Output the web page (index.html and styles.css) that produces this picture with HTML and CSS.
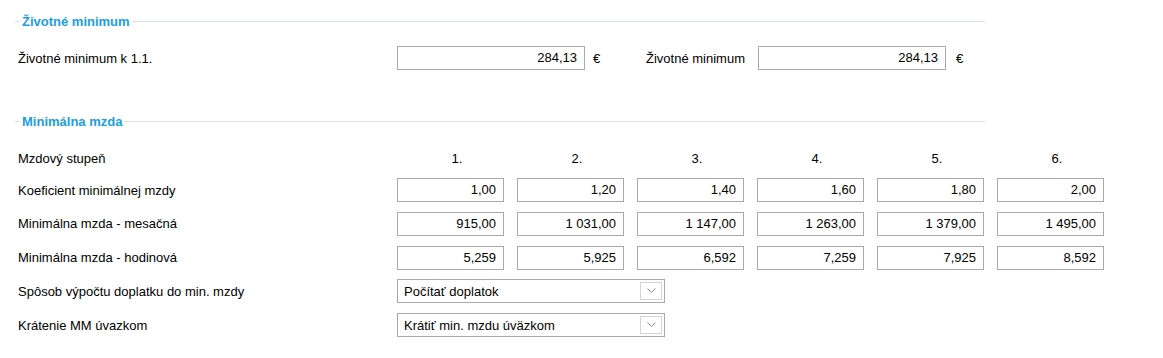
FILE: index.html
```html
<!DOCTYPE html>
<html lang="sk">
<head>
    <meta charset="UTF-8">
    <title>Životné minimum a minimálna mzda</title>
    <link rel="stylesheet" href="styles.css">
</head>
<body>
    <div class="page">
        <!-- Životné minimum -->
        <div class="group">
            <div class="group-title"><span class="line-start"></span><span class="title">Životné minimum</span><span class="line"></span></div>
            <div class="row first">
                <span class="label">Životné minimum k 1.1.</span>
                <div class="box wide">284,13</div>
                <span class="unit">€</span>
                <span class="label-inline">Životné minimum</span>
                <div class="box wide">284,13</div>
                <span class="unit second">€</span>
            </div>
        </div>

        <!-- Minimálna mzda -->
        <div class="group mzda">
            <div class="group-title"><span class="line-start"></span><span class="title">Minimálna mzda</span><span class="line"></span></div>
            <div class="row head">
                <span class="label">Mzdový stupeň</span>
                <span class="col">1.</span>
                <span class="col">2.</span>
                <span class="col">3.</span>
                <span class="col">4.</span>
                <span class="col">5.</span>
                <span class="col">6.</span>
            </div>
            <div class="row">
                <span class="label">Koeficient minimálnej mzdy</span>
                <div class="cell"><div class="box">1,00</div></div>
                <div class="cell"><div class="box">1,20</div></div>
                <div class="cell"><div class="box">1,40</div></div>
                <div class="cell"><div class="box">1,60</div></div>
                <div class="cell"><div class="box">1,80</div></div>
                <div class="cell"><div class="box">2,00</div></div>
            </div>
            <div class="row">
                <span class="label">Minimálna mzda - mesačná</span>
                <div class="cell"><div class="box">915,00</div></div>
                <div class="cell"><div class="box">1 031,00</div></div>
                <div class="cell"><div class="box">1 147,00</div></div>
                <div class="cell"><div class="box">1 263,00</div></div>
                <div class="cell"><div class="box">1 379,00</div></div>
                <div class="cell"><div class="box">1 495,00</div></div>
            </div>
            <div class="row">
                <span class="label">Minimálna mzda - hodinová</span>
                <div class="cell"><div class="box">5,259</div></div>
                <div class="cell"><div class="box">5,925</div></div>
                <div class="cell"><div class="box">6,592</div></div>
                <div class="cell"><div class="box">7,259</div></div>
                <div class="cell"><div class="box">7,925</div></div>
                <div class="cell"><div class="box">8,592</div></div>
            </div>
            <div class="row">
                <span class="label">Spôsob výpočtu doplatku do min. mzdy</span>
                <div class="select">
                    <span class="select-text">Počítať doplatok</span>
                    <span class="select-btn">
                        <svg width="9" height="6" viewBox="0 0 9 6"><path d="M0.5 0.5 L4.5 4.5 L8.5 0.5" fill="none" stroke="#888" stroke-width="1"/></svg>
                    </span>
                </div>
            </div>
            <div class="row">
                <span class="label">Krátenie MM úvazkom</span>
                <div class="select">
                    <span class="select-text">Krátiť min. mzdu úväzkom</span>
                    <span class="select-btn">
                        <svg width="9" height="6" viewBox="0 0 9 6"><path d="M0.5 0.5 L4.5 4.5 L8.5 0.5" fill="none" stroke="#888" stroke-width="1"/></svg>
                    </span>
                </div>
            </div>
        </div>
    </div>
</body>
</html>
```

FILE: styles.css
```css
* { margin: 0; padding: 0; box-sizing: border-box; }

body {
    font-family: "Liberation Sans", Arial, sans-serif;
    font-size: 13px;
    color: #000;
    background: #fff;
}

.page {
    padding: 14px 0 0 15px;
}

/* Group header with line */
.group-title {
    display: flex;
    align-items: center;
    width: 970px;
    height: 15px;
}

.line-start {
    width: 5px;
    border-top: 1px solid #d6dee6;
}

.line {
    flex: 1;
    border-top: 1px solid #d6dee6;
    margin-left: 2px;
}

.title {
    color: #1b9ee0;
    font-weight: bold;
    margin-left: 2px;
    line-height: 15px;
}

/* Rows */
.row {
    display: flex;
    align-items: center;
    height: 24px;
    padding-left: 3px;
    margin-top: 9.75px;
}

.row > * { flex-shrink: 0; }

.row.first { margin-top: 17px; }

.label {
    width: 379px;
}

.box {
    height: 24px;
    width: 107px;
    border: 1px solid #a9a9a9;
    text-align: right;
    padding-right: 7px;
    line-height: 22px;
    background: #fff;
}

.box.wide { width: 188px; }

.unit {
    width: 61px;
    padding-left: 8px;
}

.unit.second { padding-left: 10px; }

.label-inline {
    width: 112px;
}

/* Minimálna mzda */
.mzda { margin-top: 44px; }

.row.head { margin-top: 17px; }

.row.head + .row { margin-top: 8px; }

.col {
    width: 120px;
    text-align: center;
}

.cell { width: 120px; }

/* Dropdowns */
.select {
    display: flex;
    align-items: center;
    width: 268px;
    height: 24px;
    border: 1px solid #a9a9a9;
    padding: 0 2px 0 6px;
}

.select-text { flex: 1; }

.select-btn {
    width: 22px;
    height: 18px;
    border: 1px solid #d4d4d4;
    display: flex;
    align-items: center;
    justify-content: center;
}
```
